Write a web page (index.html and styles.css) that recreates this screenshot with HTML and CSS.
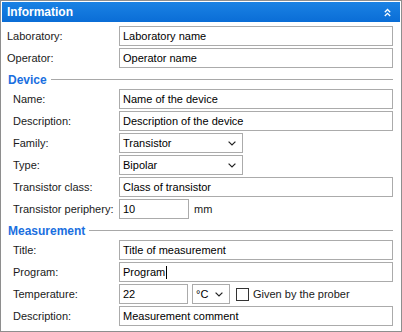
FILE: index.html
```
<!DOCTYPE html>
<html>
<head>
<meta charset="utf-8">
<link rel="stylesheet" href="styles.css">
</head>
<body>
<div class="panel">
  <div class="header">
    <span class="header-title">Information</span>
    <svg class="collapse" width="7" height="9" viewBox="0 0 7 9"><path d="M0.8 4.2 L3.5 1.5 L6.2 4.2 M0.8 8 L3.5 5.3 L6.2 8" fill="none" stroke="#fff" stroke-width="1.3"/></svg>
  </div>
  <div class="body">
    <div class="row"><span class="label">Laboratory:</span><div class="field">Laboratory name</div></div>
    <div class="row"><span class="label">Operator:</span><div class="field">Operator name</div></div>

    <div class="section"><span class="section-title">Device</span><span class="rule"></span></div>
    <div class="row sub"><span class="label">Name:</span><div class="field">Name of the device</div></div>
    <div class="row sub"><span class="label">Description:</span><div class="field">Description of the device</div></div>
    <div class="row sub"><span class="label">Family:</span><div class="field select wide">Transistor<svg class="chev" width="8" height="5" viewBox="0 0 8 5"><path d="M0.6 0.6 L4 4 L7.4 0.6" fill="none" stroke="#222" stroke-width="1.2"/></svg></div></div>
    <div class="row sub"><span class="label">Type:</span><div class="field select wide">Bipolar<svg class="chev" width="8" height="5" viewBox="0 0 8 5"><path d="M0.6 0.6 L4 4 L7.4 0.6" fill="none" stroke="#222" stroke-width="1.2"/></svg></div></div>
    <div class="row sub"><span class="label">Transistor class:</span><div class="field">Class of transistor</div></div>
    <div class="row sub"><span class="label">Transistor periphery:</span><div class="inline"><div class="field short">10</div><span class="unit">mm</span></div></div>

    <div class="section"><span class="section-title">Measurement</span><span class="rule"></span></div>
    <div class="row sub"><span class="label">Title:</span><div class="field">Title of measurement</div></div>
    <div class="row sub"><span class="label">Program:</span><div class="field">Program<span class="caret"></span></div></div>
    <div class="row sub"><span class="label">Temperature:</span>
      <div class="inline">
        <div class="field temp">22</div>
        <div class="field select unitsel">°C<svg class="chev" width="8" height="5" viewBox="0 0 8 5"><path d="M0.6 0.6 L4 4 L7.4 0.6" fill="none" stroke="#222" stroke-width="1.2"/></svg></div>
        <span class="check"></span><span class="check-label">Given by the prober</span>
      </div>
    </div>
    <div class="row sub"><span class="label">Description:</span><div class="field">Measurement comment</div></div>
  </div>
</div>
</body>
</html>
```

FILE: styles.css
```
html, body {
  margin: 0;
  padding: 0;
  background: #fff;
}
body {
  font-family: "Liberation Sans", Arial, sans-serif;
  font-size: 11px;
  color: #1a1a1a;
}
.panel {
  box-sizing: border-box;
  width: 402px;
  height: 332px;
  border: 1px solid #8e8e8e;
  padding: 1px;
  background: #fff;
}
.header {
  height: 20px;
  background: linear-gradient(#1a82e4, #0a6dd6);
  display: flex;
  align-items: center;
  justify-content: space-between;
  padding: 0 9px 0 5px;
}
.header-title {
  color: #fff;
  font-weight: bold;
  font-size: 12px;
}
.collapse {
  display: block;
}
.body {
  display: flex;
  flex-direction: column;
  gap: 2px;
  padding: 4px 7px 0 5px;
}
.row {
  display: grid;
  grid-template-columns: 112px 1fr;
  align-items: center;
  height: 20px;
}
.row.sub .label {
  padding-left: 6px;
}
.field {
  box-sizing: border-box;
  height: 20px;
  border: 1px solid #ababab;
  padding: 0 3px;
  display: flex;
  align-items: center;
  color: #000;
  white-space: nowrap;
  background: #fff;
}
.select {
  justify-content: space-between;
  padding-right: 6px;
}
.wide {
  width: 124px;
}
.chev {
  display: block;
}
.inline {
  display: flex;
  align-items: center;
}
.short {
  width: 70px;
}
.unit {
  margin-left: 5px;
}
.temp {
  width: 69px;
}
.unitsel {
  width: 38px;
  margin-left: 4px;
  padding-left: 3px;
}
.check {
  box-sizing: border-box;
  width: 13px;
  height: 13px;
  border: 1px solid #333;
  background: #fff;
  margin-left: 6px;
}
.check-label {
  margin-left: 4px;
}
.caret {
  display: inline-block;
  width: 1px;
  height: 13px;
  background: #000;
  margin-left: 1px;
}
.section {
  display: flex;
  align-items: center;
  height: 17px;
  padding-top: 2px;
  box-sizing: border-box;
  padding-left: 1px;
}
.section-title {
  color: #1a6fe0;
  font-weight: bold;
  font-size: 12px;
}
.rule {
  flex: 1;
  height: 1px;
  background: #a8a8a8;
  margin-left: 4px;
}
```
